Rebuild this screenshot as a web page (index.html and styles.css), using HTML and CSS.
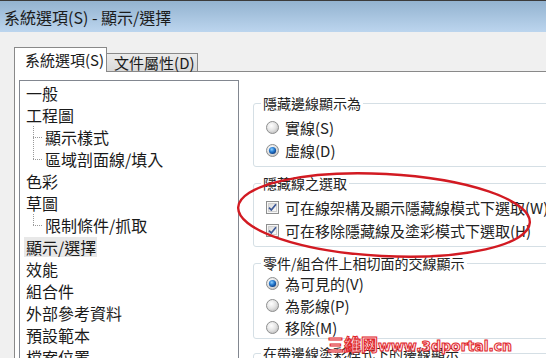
FILE: index.html
```html
<!DOCTYPE html>
<html lang="zh-Hant">
<head>
    <meta charset="UTF-8">
    <meta name="viewport" content="width=device-width, initial-scale=1.0">
    <title>系統選項(S) - 顯示/選擇</title>
    <link rel="stylesheet" href="styles.css">
</head>
<body>

    <svg class="defs" width="0" height="0">
        <defs>
            <radialGradient id="radioFace" cx="40%" cy="35%" r="70%">
                <stop offset="0" stop-color="#ffffff"/>
                <stop offset="0.55" stop-color="#e4e4e4"/>
                <stop offset="1" stop-color="#bdbdbd"/>
            </radialGradient>
            <radialGradient id="radioDot" cx="40%" cy="35%" r="65%">
                <stop offset="0" stop-color="#8fd0ff"/>
                <stop offset="0.5" stop-color="#2a7fd4"/>
                <stop offset="1" stop-color="#0b3f86"/>
            </radialGradient>
            <linearGradient id="boxFace" x1="0" y1="0" x2="1" y2="1">
                <stop offset="0" stop-color="#d9d9d9"/>
                <stop offset="1" stop-color="#fbfbfb"/>
            </linearGradient>
        </defs>
    </svg>

    <div class="titlebar">系統選項(S) - 顯示/選擇</div>

    <div class="dialog">
        <div class="tabs">
            <div class="tab active">系統選項(S)</div>
            <div class="tab">文件屬性(D)</div>
        </div>

        <div class="tab-panel">
            <ul class="tree">
                <li>一般</li>
                <li>工程圖</li>
                <li class="child"><i class="branch"></i>顯示樣式</li>
                <li class="child last"><i class="branch"></i>區域剖面線/填入</li>
                <li>色彩</li>
                <li>草圖</li>
                <li class="child last"><i class="branch"></i>限制條件/抓取</li>
                <li class="selected"><span>顯示/選擇</span></li>
                <li>效能</li>
                <li>組合件</li>
                <li>外部參考資料</li>
                <li>預設範本</li>
                <li>檔案位置</li>
            </ul>

            <div class="options">
                <fieldset>
                    <legend>隱藏邊線顯示為</legend>
                    <div class="option">
                        <svg class="radio" viewBox="0 0 13 13"><circle cx="6.5" cy="6.5" r="6" fill="url(#radioFace)" stroke="#8e8f8f"/></svg>
                        實線(S)
                    </div>
                    <div class="option">
                        <svg class="radio" viewBox="0 0 13 13"><circle cx="6.5" cy="6.5" r="6" fill="url(#radioFace)" stroke="#8e8f8f"/><circle cx="6.5" cy="6.5" r="3.6" fill="url(#radioDot)"/></svg>
                        虛線(D)
                    </div>
                </fieldset>

                <fieldset>
                    <legend>隱藏線之選取</legend>
                    <div class="option">
                        <svg class="check" viewBox="0 0 13 13"><rect x="0.5" y="0.5" width="12" height="12" fill="#f6f6f6" stroke="#8e8f8f"/><rect x="2.5" y="2.5" width="8" height="8" fill="url(#boxFace)" stroke="#d0d0d0"/><path d="M3 6.6 L5.3 9 L10 3.2" fill="none" stroke="#3c5896" stroke-width="1.7"/></svg>
                        可在線架構及顯示隱藏線模式下選取(W)
                    </div>
                    <div class="option">
                        <svg class="check" viewBox="0 0 13 13"><rect x="0.5" y="0.5" width="12" height="12" fill="#f6f6f6" stroke="#8e8f8f"/><rect x="2.5" y="2.5" width="8" height="8" fill="url(#boxFace)" stroke="#d0d0d0"/><path d="M3 6.6 L5.3 9 L10 3.2" fill="none" stroke="#3c5896" stroke-width="1.7"/></svg>
                        可在移除隱藏線及塗彩模式下選取(H)
                    </div>
                </fieldset>

                <fieldset class="compact">
                    <legend>零件/組合件上相切面的交線顯示</legend>
                    <div class="option">
                        <svg class="radio" viewBox="0 0 13 13"><circle cx="6.5" cy="6.5" r="6" fill="url(#radioFace)" stroke="#8e8f8f"/><circle cx="6.5" cy="6.5" r="3.6" fill="url(#radioDot)"/></svg>
                        為可見的(V)
                    </div>
                    <div class="option">
                        <svg class="radio" viewBox="0 0 13 13"><circle cx="6.5" cy="6.5" r="6" fill="url(#radioFace)" stroke="#8e8f8f"/></svg>
                        為影線(P)
                    </div>
                    <div class="option">
                        <svg class="radio" viewBox="0 0 13 13"><circle cx="6.5" cy="6.5" r="6" fill="url(#radioFace)" stroke="#8e8f8f"/></svg>
                        移除(M)
                    </div>
                </fieldset>

                <fieldset>
                    <legend>在帶邊線塗彩模式下的邊線顯示</legend>
                    <div class="option">&nbsp;</div>
                </fieldset>
            </div>
        </div>
    </div>

    <!-- red pen mark drawn over the screenshot -->
    <svg class="markup" width="546" height="358" viewBox="0 0 546 358">
        <ellipse cx="384" cy="215" rx="146" ry="41" transform="rotate(3 384 215)" fill="none" stroke="#d21a22" stroke-width="2.4"/>
    </svg>

    <div class="watermark"><span class="wm-cn">三維网</span><span class="wm-en">www.3dportal.cn</span></div>

</body>
</html>
```

FILE: styles.css
```css
body {
    margin: 0;
    width: 546px;
    height: 358px;
    overflow: hidden;
    position: relative;
    background: #f0f0f0;
    font-family: "Noto Sans CJK TC", "Noto Sans", sans-serif;
    color: #1a1a1a;
}

.defs {
    position: absolute;
    width: 0;
    height: 0;
}

.titlebar {
    height: 31px;
    border-top: 1px solid #3b3b3b;
    background: linear-gradient(#93b3d0, #bcd5ee);
    padding-left: 4px;
    font-size: 16px;
    line-height: 33px;
    color: #1b1b1b;
    white-space: nowrap;
}

.dialog {
    padding: 15px 0 0 14px;
}

.tabs {
    display: flex;
    align-items: flex-end;
    height: 25px;
    margin-bottom: -1px;
    position: relative;
    z-index: 1;
    font-size: 15px;
}

.tab {
    height: 17px;
    line-height: 17px;
    padding: 0 2px 0 7px;
    border-top: 1px solid #898989;
    border-right: 1px solid #898989;
    border-bottom: 1px solid #898989;
    background: linear-gradient(#ececec, #d9d9d9);
    white-space: nowrap;
}

.tab.active {
    height: 24px;
    line-height: 24px;
    padding: 0 2px 0 10px;
    border-left: 1px solid #898989;
    border-bottom: none;
    background: #fff;
}

.tab-panel {
    display: flex;
    align-items: flex-start;
    height: 287px;
    overflow: hidden;
    background: #fff;
    border-top: 1px solid #898989;
    border-left: 1px solid #898989;
}

.tree {
    list-style: none;
    margin: 8px 0 0 4px;
    padding: 1px 0 0 0;
    width: 218px;
    height: 300px;
    flex-shrink: 0;
    border: 1px solid #828790;
    font-size: 16px;
}

.tree li {
    height: 22px;
    line-height: 22px;
    padding-left: 6px;
    white-space: nowrap;
}

.tree .child {
    padding-left: 13px;
}

.branch {
    display: inline-block;
    vertical-align: top;
    width: 12px;
    height: 22px;
    background-image:
        repeating-linear-gradient(to bottom, #9a9a9a 0 1px, transparent 1px 2px),
        repeating-linear-gradient(to right, #9a9a9a 0 1px, transparent 1px 2px);
    background-size: 1px 100%, 9px 1px;
    background-position: 0 0, 0 11px;
    background-repeat: no-repeat;
}

.last .branch {
    background-size: 1px 12px, 9px 1px;
}

.tree .selected span {
    display: inline-block;
    line-height: 20px;
    margin-left: -2px;
    padding: 0 1px 0 2px;
    background: #e8e8e8;
}

.options {
    width: 320px;
    flex-shrink: 0;
    margin: 22px 0 0 14px;
}

fieldset {
    margin: 0 0 7px;
    padding: 4px 0 4px 12px;
    border: 1px solid #d5dfe5;
    border-radius: 3px;
}

fieldset.compact {
    padding: 0 0 0 12px;
    margin-bottom: 5px;
}

legend {
    font-size: 14px;
    line-height: 18px;
    padding: 0 2px;
    margin-left: -5px;
    color: #222;
}

.option {
    display: flex;
    align-items: center;
    gap: 6px;
    height: 23px;
    font-size: 15px;
    white-space: nowrap;
    color: #222;
}

.compact .option {
    height: 22px;
}

.radio, .check {
    width: 13px;
    height: 13px;
    flex-shrink: 0;
}

.markup {
    position: absolute;
    left: 0;
    top: 0;
    pointer-events: none;
}

.watermark {
    position: absolute;
    left: 327px;
    top: 331px;
    white-space: nowrap;
    color: #ffe3e3;
    -webkit-text-stroke: 1px #e0262c;
    font-weight: bold;
}

.wm-cn {
    font-family: "Noto Sans CJK TC", sans-serif;
    font-size: 17px;
}

.wm-en {
    font-family: "DejaVu Sans", sans-serif;
    font-size: 14px;
}
```
